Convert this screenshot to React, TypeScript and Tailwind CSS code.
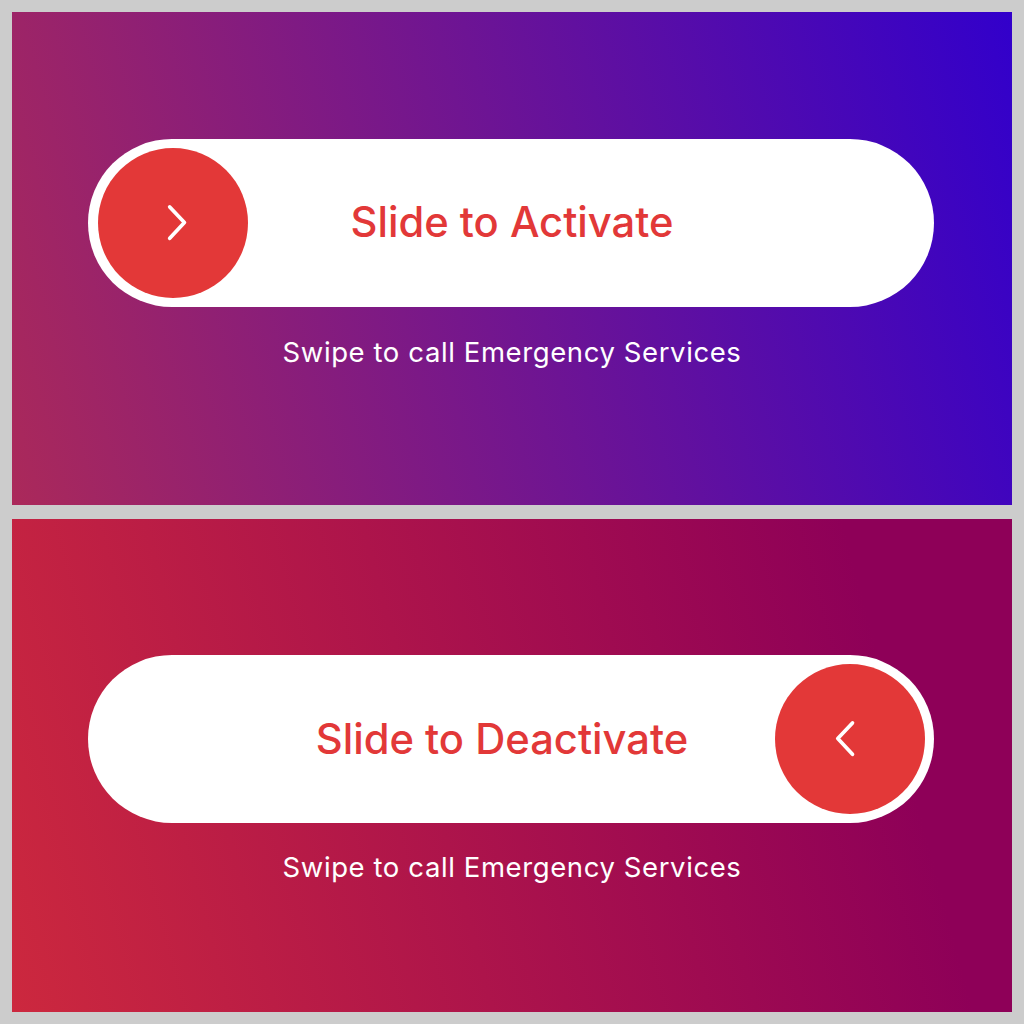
import React from "react";

function Chevron({ dir }: { dir: "right" | "left" }) {
  return (
    <svg width="40" height="40" viewBox="0 0 40 40" fill="none">
      {dir === "right" ? (
        <path d="M14 4 L29 20 L14 36" stroke="white" strokeWidth="3.8" strokeLinecap="round" strokeLinejoin="round" transform="translate(3,0) scale(0.98)" />
      ) : (
        <path d="M26 4 L11 20 L26 36" stroke="white" strokeWidth="3.8" strokeLinecap="round" strokeLinejoin="round" transform="translate(-3,0) scale(0.98)" />
      )}
    </svg>
  );
}

function Slider({ label, side }: { label: string; side: "left" | "right" }) {
  return (
    <div className="relative ml-[76px] flex h-[168px] w-[846px] items-center rounded-full bg-white p-[9px]">
      <div
        className={
          side === "left"
            ? "absolute left-[10px] top-[9px] flex h-[150px] w-[150px] items-center justify-center rounded-full bg-[#e33838]"
            : "absolute right-[9px] top-[9px] flex h-[150px] w-[150px] items-center justify-center rounded-full bg-[#e33838]"
        }
      >
        <Chevron dir={side === "left" ? "right" : "left"} />
      </div>
      <div
        className={
          side === "left"
            ? "flex w-full justify-center pl-[2px] text-[41.7px] font-medium leading-none text-[#e23838]"
            : "flex w-full justify-center pr-[18px] pt-[2px] text-[41.7px] font-medium leading-none text-[#e23838]"
        }
      >
        {label}
      </div>
    </div>
  );
}

export default function App() {
  return (
    <div
      className="flex h-[1024px] w-[1024px] flex-col gap-[14px] bg-[#cccccc] p-[12px]"
      style={{ fontFamily: "Inter, 'Noto Sans', sans-serif" }}
    >
      <div className="flex h-[493px] w-[1000px] flex-col bg-[linear-gradient(75deg,#ab295a,#3200cb)] pt-[127px]">
        <Slider label="Slide to Activate" side="left" />
        <div className="mt-[30px] text-center text-[27.5px] leading-[30px] tracking-[0.6px] text-white">
          Swipe to call Emergency Services
        </div>
      </div>
      <div className="flex h-[493px] w-[1000px] flex-col bg-[linear-gradient(75deg,#cc283e,#8e0058_85%)] pt-[136px]">
        <Slider label="Slide to Deactivate" side="right" />
        <div className="mt-[29px] text-center text-[27.5px] leading-[30px] tracking-[0.6px] text-white">
          Swipe to call Emergency Services
        </div>
      </div>
    </div>
  );
}
